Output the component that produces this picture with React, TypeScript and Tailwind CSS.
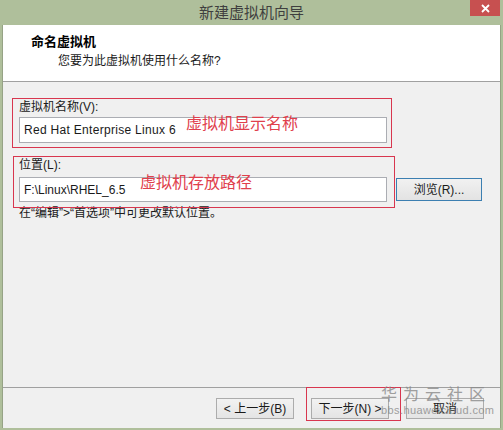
const font = "font-['Liberation_Sans','Noto_Sans_CJK_SC',sans-serif]"

const Btn = ({ label, className = '' }: { label: string; className?: string }) => (
  <div
    className={`flex h-[21px] w-[78px] items-center justify-center border border-[#acacac] bg-gradient-to-b from-[#f2f2f2] to-[#e4e4e4] text-[12px] text-[#1a1a1a] ${className}`}
  >
    {label}
  </div>
)

export default function App() {
  return (
    <div className={`relative flex h-[430px] w-[503px] flex-col bg-[#afbf9b] ${font}`}>
      {/* title bar */}
      <div className="relative flex h-[25px] items-center justify-center">
        <span className="text-[15px] leading-none text-[#3f3f3f]">新建虚拟机向导</span>
        <div className="absolute top-0 right-[3px] flex h-[16px] w-[30px] items-center justify-center bg-[#c75050]">
          <svg width="9" height="9" viewBox="0 0 9 9">
            <path d="M1 1L8 8M8 1L1 8" stroke="#fff" strokeWidth="1.8" />
          </svg>
        </div>
      </div>

      <div className="mx-[2px] flex flex-1 flex-col border-x border-[#96a386] bg-[#f0f0f0]">
        {/* header */}
        <div className="h-[57px] border-b border-[#a0a0a0] bg-white pt-[9px] pl-[28px]">
          <div className="text-[13px] leading-[16px] font-bold text-black">命名虚拟机</div>
          <div className="mt-[3px] pl-[27px] text-[12px] leading-[16px] text-[#1a1a1a]">您要为此虚拟机使用什么名称?</div>
        </div>

        {/* body */}
        <div className="flex flex-1 flex-col pt-[16px] text-[12px] text-[#1a1a1a]">
          <div className="relative ml-[9px] h-[50px] w-[380px] border border-[#d8364f] pl-[6px]">
            <div className="leading-[16px]">虚拟机名称(V):</div>
            <div className="mt-[2px] flex h-[26px] w-[368px] items-center border border-[#abadb3] bg-white pl-[4px] tracking-[0.3px]">
              Red Hat Enterprise Linux 6
            </div>
            <span className="absolute top-[16px] left-[173px] text-[16px] leading-[18px] text-[#e0404c]">虚拟机显示名称</span>
          </div>

          <div className="mt-[8px] flex items-start">
            <div className="relative ml-[10px] h-[52px] w-[382px] border border-[#d8364f] pl-[5px]">
              <div className="leading-[16px]">位置(L):</div>
              <div className="mt-[4px] flex h-[25px] w-[368px] items-center border border-[#abadb3] bg-white pl-[4px]">
                F:\Linux\RHEL_6.5
              </div>
              <span className="absolute top-[17px] left-[126px] text-[16px] leading-[18px] text-[#e0404c]">虚拟机存放路径</span>
            </div>
            <div className="mt-[22px] ml-[1px] flex h-[23px] w-[86px] items-center justify-center border border-[#3c7fb1] bg-gradient-to-b from-[#f1f1f1] to-[#e3e3e3]">
              浏览(R)...
            </div>
          </div>

          <div className="-mt-[3px] ml-[16px] leading-[16px]">在“编辑”&gt;“首选项”中可更改默认位置。</div>
        </div>

        {/* footer */}
        <div className="flex h-[41px] gap-[17px] border-t border-[#a0a0a0] pt-[10px] pl-[213px]">
          <Btn label="< 上一步(B)" />
          <div className="relative">
            <Btn label="下一步(N) >" />
            <div className="absolute -top-[11px] -left-[5px] h-[34px] w-[95px] border border-[#d8364f]" />
          </div>
          <Btn label="取消" />
        </div>
      </div>
      <div className="h-[2px]" />

      {/* watermark */}
      <div className="pointer-events-none absolute top-[386px] left-[381px] flex flex-col text-[#8a8a8a] opacity-80">
        <span className="text-[16px] leading-[18px] tracking-[6px]">华为云社区</span>
        <span className="text-[11px] leading-[12px] tracking-[0.4px]">bbs.huaweicloud.com</span>
      </div>
    </div>
  )
}
